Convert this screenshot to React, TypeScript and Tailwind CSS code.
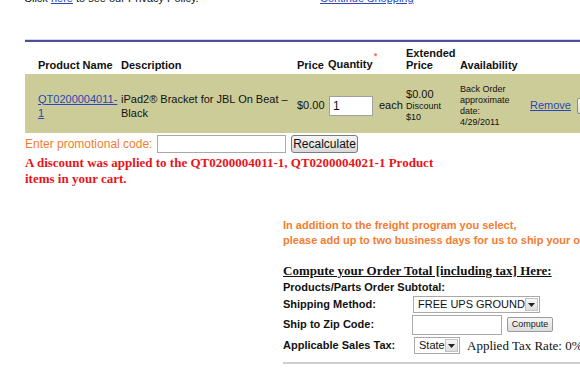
function Select({ value, width }: { value: string; width: string }) {
  return (
    <div className={`flex items-center h-[17px] ${width} border border-[#a9a9a9] bg-white font-normal`}>
      <span className="flex-1 pl-[4px] text-[11px] leading-[15px] text-[#111] whitespace-nowrap overflow-hidden">{value}</span>
      <span className="w-[13px] h-[13px] mr-[1px] flex items-center justify-center border border-[#c3c3c3] bg-gradient-to-b from-[#f7f7f7] to-[#dedede]">
        <svg width="7" height="4" viewBox="0 0 7 4">
          <path d="M0 0 L7 0 L3.5 4 Z" fill="#222" />
        </svg>
      </span>
    </div>
  );
}

export default function App() {
  const link = "text-[#2a47b5] underline";
  return (
    <div className="w-[580px] h-[373px] overflow-hidden bg-white relative font-['Arial','Liberation_Sans',sans-serif] text-[#111]">
      <div className="w-[640px]">
        {/* top links, cut off */}
        <div className="flex h-[13px] -mt-[8px] text-[11px] leading-[13px]">
          <span className="ml-[24px] w-[296px]">
            Click <a href="#" className={link}>here</a> to see our Privacy Policy.
          </span>
          <a href="#" className={link}>Continue Shopping</a>
        </div>

        <div className="mt-[34px] ml-[25px] h-[1px] bg-[#d8d8e0]" />
        <div className="ml-[25px] h-[2px] bg-[#4b4e9e]" />

        {/* cart table */}
        <table className="ml-[25px] table-fixed border-collapse w-[615px] text-[11px]">
          <colgroup>
            <col className="w-[13px]" />
            <col className="w-[83px]" />
            <col className="w-[176px]" />
            <col className="w-[31px]" />
            <col className="w-[51px]" />
            <col className="w-[27px]" />
            <col className="w-[54px]" />
            <col className="w-[70px]" />
            <col className="w-[47px]" />
            <col className="w-[63px]" />
          </colgroup>
          <thead>
            <tr className="h-[32px] font-bold text-left align-bottom leading-[12px]">
              <th className="p-0" />
              <th className="p-0 pb-[3px] whitespace-nowrap">Product Name</th>
              <th className="p-0 pb-[3px]">Description</th>
              <th className="p-0 pb-[3px]">Price</th>
              <th colSpan={2} className="p-0 pb-[3px] whitespace-nowrap">
                Quantity<span className="relative -top-[9px] ml-[1px] text-[9px] text-[#f4743a]">*</span>
              </th>
              <th className="p-0 pb-[3px]">
                Extended<br />Price
              </th>
              <th className="p-0 pb-[3px]">Availability</th>
              <th className="p-0" />
              <th className="p-0" />
            </tr>
          </thead>
          <tbody>
            <tr className="h-[59px] bg-[#cccc99] align-middle">
              <td className="p-0" />
              <td className="p-0 pt-[4px] leading-[14px]">
                <a href="#" className={link}>
                  QT0200004011-<br />1
                </a>
              </td>
              <td className="p-0 pt-[4px] leading-[14px]">
                iPad2® Bracket for JBL On Beat –<br />Black
              </td>
              <td className="p-0 pt-[4px]">$0.00</td>
              <td className="p-0 pt-[4px]">
                <input
                  readOnly
                  value="1"
                  className="block w-[44px] h-[20px] ml-[1px] px-[3px] bg-white border border-[#a0a0a0] text-[12px] text-[#111] outline-none"
                />
              </td>
              <td className="p-0 pt-[4px]">each</td>
              <td className="p-0 pt-[4px]">
                <div className="leading-[13px]">$0.00</div>
                <div className="text-[9px] leading-[11px]">
                  Discount<br />$10
                </div>
              </td>
              <td className="p-0 pt-[4px] text-[9px] leading-[11px]">
                Back Order<br />approximate<br />date:<br />4/29/2011
              </td>
              <td className="p-0 pt-[4px]">
                <a href="#" className={link}>Remove</a>
              </td>
              <td className="p-0 pt-[4px]">
                <div className="w-[20px] h-[16px] border border-[#8a8a8a] rounded-[2px] bg-gradient-to-b from-[#fafafa] to-[#dddddd]" />
              </td>
            </tr>
          </tbody>
        </table>

        {/* promo */}
        <div className="flex items-center h-[20px] mt-[1px] ml-[25px]">
          <span className="text-[12px] text-[#f47c30] w-[132px] whitespace-nowrap">Enter promotional code:</span>
          <input readOnly className="w-[129px] h-[18px] border border-[#a9a9a9] bg-white outline-none" />
          <button className="ml-[5px] w-[67px] h-[18px] border border-[#7a7a7a] rounded-[3px] bg-gradient-to-b from-[#f6f6f6] to-[#d9d9d9] text-[12px] leading-[16px] text-[#111]">
            Recalculate
          </button>
        </div>

        <p className="mt-[1px] ml-[25px] w-[430px] font-['Liberation_Serif','Times_New_Roman',serif] font-bold text-[13px] leading-[16px] text-[#e8141b]">
          A discount was applied to the QT0200004011-1, QT0200004021-1 Product items in your cart.
        </p>

        {/* shipping */}
        <div className="ml-[283px] mt-[31px]">
          <div className="text-[11px] font-bold leading-[15px] text-[#f47c30] whitespace-nowrap">
            In addition to the freight program you select,
            <br />
            please add up to two business days for us to ship your order.
          </div>

          <div className="mt-[15px] font-['Liberation_Serif','Times_New_Roman',serif] font-bold text-[13px] leading-[16px] underline whitespace-nowrap">
            Compute your Order Total [including tax] Here:
          </div>
          <div className="h-[16px] text-[11px] font-bold leading-[16px] whitespace-nowrap">Products/Parts Order Subtotal:</div>

          <div className="flex items-center h-[19px] text-[11px] font-bold">
            <span className="w-[130px]">Shipping Method:</span>
            <Select value="FREE UPS GROUND" width="w-[127px]" />
          </div>
          <div className="flex items-center h-[21px] text-[11px] font-bold">
            <span className="w-[129px]">Ship to Zip Code:</span>
            <input readOnly className="w-[90px] h-[20px] border border-[#a9a9a9] bg-white outline-none" />
            <button className="ml-[5px] w-[46px] h-[15px] border border-[#9a9a9a] rounded-[2px] bg-gradient-to-b from-[#f6f6f6] to-[#dcdcdc] text-[9px] font-normal leading-[13px] text-[#222]">
              Compute
            </button>
          </div>
          <div className="flex items-center h-[21px] text-[11px] font-bold whitespace-nowrap">
            <span className="w-[131px]">Applicable Sales Tax:</span>
            <Select value="State" width="w-[46px]" />
            <span className="ml-[7px] font-['Liberation_Serif','Times_New_Roman',serif] font-normal text-[13px]">
              Applied Tax Rate: 0%
            </span>
          </div>
          <div className="mt-[6px] h-[2px] bg-[#cfcfcf]" />
        </div>
      </div>
    </div>
  );
}
